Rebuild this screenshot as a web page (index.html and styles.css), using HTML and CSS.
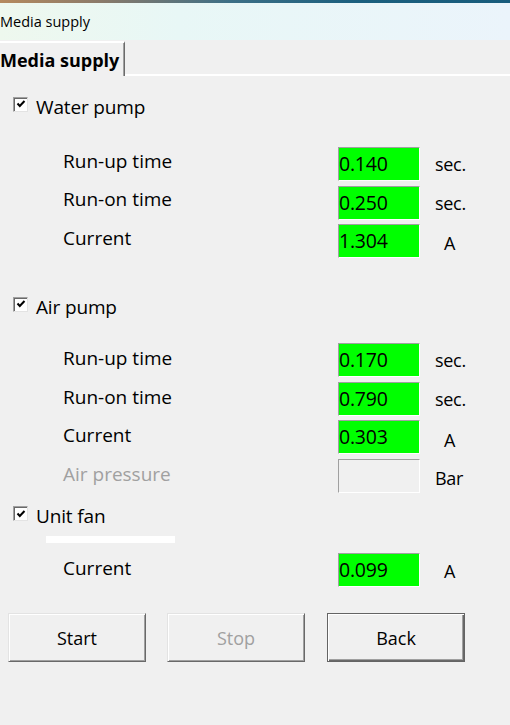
FILE: index.html
```html
<!DOCTYPE html>
<html>
<head>
<meta charset="utf-8">
<link rel="stylesheet" href="styles.css">
</head>
<body>
<div class="window">
  <div class="titlebar">
    <div class="title-strip"></div>
    <div class="title-text">Media supply</div>
  </div>
  <div class="tabs">
    <div class="tab">Media supply</div>
    <div class="tab-rest"></div>
  </div>
  <div class="content">
    <div class="check-row water-check">
      <span class="checkbox"><svg viewBox="0 0 12 12" width="12" height="12"><path d="M2.5 5.5 L4.8 8 L9.5 3" fill="none" stroke="#000" stroke-width="2"/></svg></span>
      <span class="check-label">Water pump</span>
    </div>
    <div class="rows water-rows">
      <div class="row"><span class="lbl">Run-up time</span><span class="box on">0.140</span><span class="unit">sec.</span></div>
      <div class="row"><span class="lbl">Run-on time</span><span class="box on">0.250</span><span class="unit">sec.</span></div>
      <div class="row"><span class="lbl">Current</span><span class="box on">1.304</span><span class="unit unit-a">A</span></div>
    </div>

    <div class="check-row air-check">
      <span class="checkbox"><svg viewBox="0 0 12 12" width="12" height="12"><path d="M2.5 5.5 L4.8 8 L9.5 3" fill="none" stroke="#000" stroke-width="2"/></svg></span>
      <span class="check-label">Air pump</span>
    </div>
    <div class="rows air-rows">
      <div class="row"><span class="lbl">Run-up time</span><span class="box on">0.170</span><span class="unit">sec.</span></div>
      <div class="row"><span class="lbl">Run-on time</span><span class="box on">0.790</span><span class="unit">sec.</span></div>
      <div class="row"><span class="lbl">Current</span><span class="box on">0.303</span><span class="unit unit-a">A</span></div>
      <div class="row"><span class="lbl disabled">Air pressure</span><span class="box off"></span><span class="unit unit-bar">Bar</span></div>
    </div>

    <div class="check-row fan-check">
      <span class="checkbox"><svg viewBox="0 0 12 12" width="12" height="12"><path d="M2.5 5.5 L4.8 8 L9.5 3" fill="none" stroke="#000" stroke-width="2"/></svg></span>
      <span class="check-label">Unit fan</span>
    </div>
    <div class="white-bar"></div>
    <div class="rows fan-rows">
      <div class="row"><span class="lbl">Current</span><span class="box on">0.099</span><span class="unit unit-a">A</span></div>
    </div>

    <div class="buttons">
      <button class="btn">Start</button>
      <button class="btn disabled-btn">Stop</button>
      <button class="btn default-btn">Back</button>
    </div>
  </div>
</div>
</body>
</html>
```
FILE: styles.css
```css
* { box-sizing: border-box; }
html, body { margin: 0; padding: 0; }
body {
  background: #f0f0f0;
  font-family: "Open Sans", "Noto Sans", sans-serif;
  color: #000;
  width: 510px;
  height: 725px;
  overflow: hidden;
}
.titlebar {
  height: 40px;
  background: linear-gradient(90deg, #eef8ee 0%, #e8f7f6 35%, #ebf4fb 100%);
}
.title-strip {
  height: 3px;
  background: linear-gradient(90deg, #b58a5e 0%, #8a7a6a 20%, #3d6f86 45%, #1b5f7e 70%, #185c7c 100%);
}
.title-text {
  font-size: 14.5px;
  line-height: 18px;
  padding: 10px 0 0 0;
}
.tabs {
  display: flex;
  height: 36px;
}
.tab {
  width: 125px;
  border-top: 2px solid #ffffff;
  border-right: 1px solid #6b6b6b;
  box-shadow: inset -1px 0 0 #a0a0a0;
  font-weight: bold;
  font-size: 18px;
  line-height: 30px;
  padding-top: 2px;
  margin-top: 1px;
}
.tab-rest {
  flex: 1;
  border-bottom: 2px solid #ffffff;
}
.content {
  display: flex;
  flex-direction: column;
}
.check-row {
  display: flex;
  align-items: center;
  height: 20px;
  padding-left: 13px;
}
.checkbox {
  width: 15px;
  height: 15px;
  border: 1px solid #a0a0a0;
  border-right-color: #e3e3e3;
  border-bottom-color: #e3e3e3;
  box-shadow: inset 1px 1px 0 #696969;
  background: #fff;
  display: flex;
  align-items: center;
  justify-content: center;
  flex: none;
}
.checkbox svg { display: block; margin: 0 0 0 1px; }
.check-label {
  margin-left: 8px;
  font-size: 19px;
  letter-spacing: -0.15px;
  line-height: 20px;
  padding-top: 5px;
}
.water-check { margin-top: 18px; }
.air-check { margin-top: 36px; }
.fan-check { margin-top: 11px; }
.rows {
  display: flex;
  flex-direction: column;
  padding-left: 63px;
}
.water-rows { margin-top: 33px; gap: 4.5px; }
.air-rows { margin-top: 29px; gap: 4.67px; }
.fan-rows { margin-top: 10px; }
.row {
  display: flex;
  align-items: center;
  height: 34px;
}
.lbl {
  width: 275px;
  font-size: 19px;
  margin-top: -4px;
}
.water-rows .lbl { margin-top: -7px; }
.lbl.disabled { color: #a0a0a0; }
.box {
  width: 82px;
  height: 34px;
  border-top: 1px solid #a0a0a0;
  border-left: 1px solid #a0a0a0;
  border-right: 1px solid #ffffff;
  border-bottom: 1px solid #ffffff;
  font-size: 19.5px;
  line-height: 32px;
  padding-left: 0;
  letter-spacing: -0.2px;
}
.box.on { background: #00ff00; }
.box.off { background: #f0f0f0; }
.unit {
  font-size: 18px;
  margin-left: 15px;
  letter-spacing: -0.3px;
}
.unit-a { margin-left: 24px; margin-top: 3px; }
.air-rows .unit-a { margin-top: 6px; }
.unit-bar { margin-top: 5px; }
.white-bar {
  margin-top: 12px;
  margin-left: 46px;
  width: 129px;
  height: 7px;
  background: #ffffff;
}
.buttons {
  display: flex;
  margin-top: 26px;
  padding-left: 8px;
}
.btn {
  width: 138px;
  height: 49px;
  margin-right: 21px;
  background: #f0f0f0;
  font-family: inherit;
  font-size: 18px;
  color: #000;
  border-top: 1px solid #e3e3e3;
  border-left: 1px solid #e3e3e3;
  border-right: 1px solid #696969;
  border-bottom: 1px solid #696969;
  box-shadow: inset 1px 1px 0 #ffffff, inset -1px -1px 0 #a0a0a0;
  padding: 2px 0 0 0;
}
.btn.disabled-btn { color: #a0a0a0; margin-right: 22px; }
.btn.default-btn {
  border: 1px solid #646464;
  box-shadow: inset 1px 1px 0 #ffffff, inset -1px -1px 0 #696969, inset -2px -2px 0 #a0a0a0;
}
```
